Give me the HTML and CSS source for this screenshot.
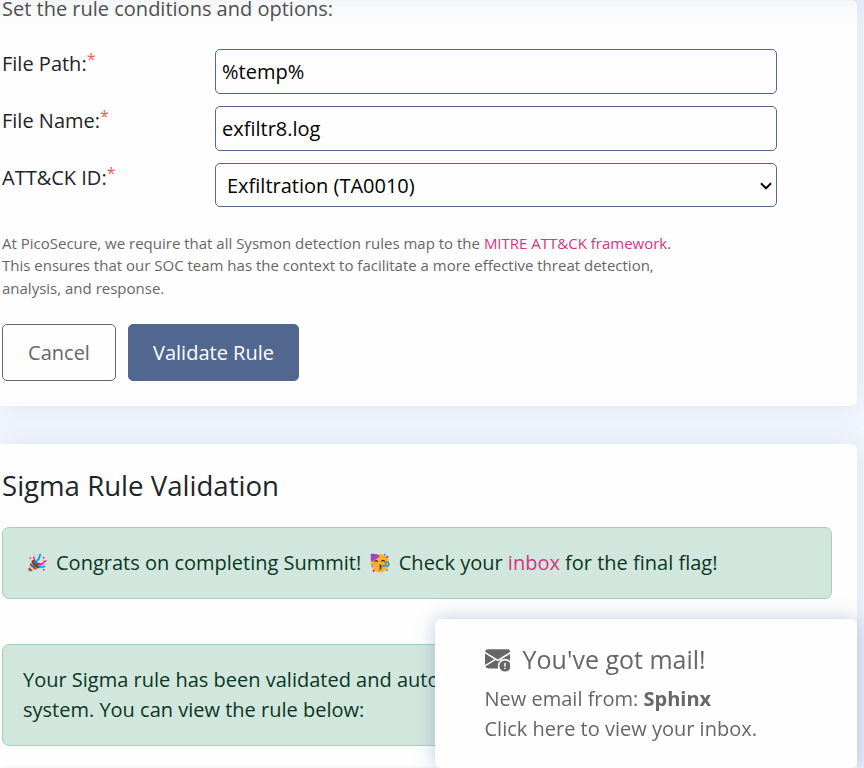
FILE: index.html
```html
<!DOCTYPE html>
<html lang="en">
<head>
<meta charset="utf-8">
<title>Sigma Rule Builder</title>
<link rel="stylesheet" href="styles.css">
</head>
<body>
<main class="page">
  <section class="card card-form">
    <p class="intro">Set the rule conditions and options:</p>
    <form class="rule-form">
      <div class="field">
        <label for="path">File Path:<span class="required">*</span></label>
        <input id="path" class="control" type="text" value="%temp%" spellcheck="false">
      </div>
      <div class="field">
        <label for="name">File Name:<span class="required">*</span></label>
        <input id="name" class="control" type="text" value="exfiltr8.log" spellcheck="false">
      </div>
      <div class="field">
        <label for="attack">ATT&amp;CK ID:<span class="required">*</span></label>
        <div class="select-wrap">
          <select id="attack" class="control control-select"><option>Exfiltration (TA0010)</option></select>
          <svg class="chevron" viewBox="0 0 12 8" aria-hidden="true"><path d="M1 1.300 6 6.300 11 1.300" fill="none" stroke="#000" stroke-width="2"/></svg>
        </div>
      </div>
      <p class="note">At PicoSecure, we require that all Sysmon detection rules map to the <a href="#">MITRE ATT&amp;CK framework</a>. This ensures that our SOC team has the context to facilitate a more effective threat detection, analysis, and response.</p>
      <div class="actions">
        <button type="button" class="btn btn-outline">Cancel</button>
        <button type="button" class="btn btn-primary">Validate Rule</button>
      </div>
    </form>
  </section>

  <section class="card card-result">
    <h2>Sigma Rule Validation</h2>
    <div class="alert alert-congrats">
      <svg class="emoji" viewBox="0 0 20 20" aria-hidden="true">
        <path d="M4.500 7.500 0 19.500 12.500 15z" fill="#ffc83d"/>
        <path d="M3.600 10 10 16l-2 .8L2.800 12zM2 14.300 5.600 17.600l-2 .8L1.200 16.400z" fill="#5b4fc4"/>
        <ellipse cx="8.700" cy="11.200" rx="2.500" ry="5.300" transform="rotate(-45 8.700 11.200)" fill="#6d4534"/>
        <path d="M8.500 10.500C8 7.500 10.500 8 12 5.500 13 3.500 11.500 2 14 1.500" fill="none" stroke="#00a6ed" stroke-width="2"/>
        <path d="M10.500 11.500c2-2.500 2.500 1 4.500-.5s2-3.500 4.500-3" fill="none" stroke="#f70a8d" stroke-width="1.600"/>
        <path d="M10.500 12.500c2-.5 2.500 2 4.500 1.500s2-1 3 0" fill="none" stroke="#00a6ed" stroke-width="1.800"/>
        <path d="M7.500 9C8.500 6 6 6 7 3.500" fill="none" stroke="#f70a8d" stroke-width="1.400"/>
        <path d="M2.500 4.500h1.400v1.400H2.500zM16.500 3.500l1.300 1-1.200 1.200-1-1zM16 16h1.400v1.400H16z" fill="#f70a8d"/>
        <path d="M6.500.5h1.300v1.300H6.500zM15.500 6.800h1.300V8h-1.300zM17.500 10.500h1.300v1.300h-1.300z" fill="#ffb02e"/>
      </svg>
      <span>Congrats on completing Summit!</span>
      <svg class="emoji emoji-face" viewBox="0 0 20 20" aria-hidden="true">
        <circle cx="10" cy="10.300" r="9.200" fill="#ffb02e"/>
        <path d="M.8 8.500.7 1.300 2 .5 9.700 2.200C7 3.500 4.500 5.500.8 8.500z" fill="#8b48cf"/>
        <path d="M1.500 3 5.500.9l2 .5L1.200 5.200zM1 7.300 9 2.400l.7 1.300L2 8.800z" fill="#c23aa8"/>
        <path d="M4.300 8.800q1.600-2.500 3.500 0M11.300 8.600q1.600-2.500 3.500 0" fill="none" stroke="#402a32" stroke-width="1.200"/>
        <path d="M9.200 12c3-.3 2 1.900.4 2 2 .2 2 2.400-.4 2.200" fill="none" stroke="#402a32" stroke-width="1.100"/>
        <path d="M11.500 13h5.300c2.700 0 2.700-4 0-4-2.100 0-2.100 2.300-.4 2.300" fill="none" stroke="#209bc9" stroke-width="1.400"/>
        <path d="M14 .7h1.300v2H14zM1.500 11.500h1.300v2H1.500zM17 16l1.300 1-1 1.200-1.300-1z" fill="#00a6ed"/>
        <path d="m17 2.500 1.500 1L17 5.500l-1-1.200zM3.500 16.500 5 17.700l-1.300 1.600-1.200-1.200z" fill="#f70a8d"/>
      </svg>
      <span>Check your <a href="#">inbox</a> for the final flag!</span>
    </div>
    <div class="alert alert-rule">Your Sigma rule has been validated and automatically<br>system. You can view the rule below:</div>
    <div class="code-panel"></div>
  </section>
</main>

<aside class="toast">
  <h3 class="toast-title">
    <svg class="mail-icon" viewBox="0 0 16 16" fill="currentColor" aria-hidden="true">
      <path d="M.05 3.555A2 2 0 0 1 2 2h12a2 2 0 0 1 1.950 1.555L8 8.414zM0 4.697v7.104l5.803-3.558zm.192 8.159 6.570-4.027L8 9.586l1.239-.757.367.225A4.490 4.490 0 0 0 8 12.500c0 .526.09 1.030.256 1.500H2a2 2 0 0 1-1.808-1.144M16 4.697v4.974A4.500 4.500 0 0 0 12.500 8a4.500 4.500 0 0 0-1.965.45l-.338-.207z"/>
      <path d="M12.500 16a3.500 3.500 0 1 0 0-7 3.500 3.500 0 0 0 0 7m.5-5v1.500a.5.5 0 0 1-1 0V11a.5.5 0 0 1 1 0m0 3a.5.5 0 1 1-1 0 .5.5 0 0 1 1 0"/>
    </svg>
    <span>You've got mail!</span>
  </h3>
  <p>New email from: <strong>Sphinx</strong></p>
  <p>Click here to view your inbox.</p>
</aside>
<div class="top-shade"></div>
</body>
</html>
```
FILE: styles.css
```css
* {
  box-sizing: border-box;
}

body {
  margin: 0;
  height: 768px;
  overflow: hidden;
  background: #f2f6fe;
  color: #212529;
  font: 20px/30px "Open Sans", sans-serif;
}

h2,
h3,
p {
  margin: 0;
  font-weight: 400;
}

a {
  color: #d63384;
  text-decoration: none;
}

.page {
  display: flex;
  flex-direction: column;
  gap: 38px;
  height: 768px;
  overflow: hidden;
}

.card {
  flex: none;
  width: 857px;
  padding-left: 2px;
  border-radius: 0 6px 6px 0;
  background: #fefefe;
  box-shadow: 0 0 30px rgba(82, 110, 150, 0.14);
}

.card-form {
  height: 406px;
}

.intro {
  margin-top: -6px;
  color: #4f4f4f;
}

.rule-form {
  padding-top: 25px;
}

.field {
  display: flex;
  align-items: flex-start;
  width: 775px;
  height: 45px;
  margin-bottom: 12px;
}

.field label {
  flex: 0 0 213px;
}

.required {
  position: relative;
  top: -6px;
  color: #f05a5a;
  font-size: 16px;
  line-height: 0;
}

.control {
  flex: 1;
  min-width: 0;
  height: 45px;
  padding: 0 6px;
  border: 1px solid #51678f;
  border-radius: 5px;
  background: #fefefe;
  color: #000;
  font: inherit;
}

.select-wrap {
  position: relative;
  flex: 1;
  height: 44px;
}

.control-select {
  display: block;
  width: 100%;
  height: 44px;
  padding: 2px 11px 0;
  appearance: none;
}

.chevron {
  position: absolute;
  top: 19px;
  right: 5px;
  width: 12px;
  height: 8px;
  pointer-events: none;
}

.note {
  width: 690px;
  padding-top: 11.500px;
  color: #666;
  font-size: 15px;
  line-height: 22.500px;
}

.actions {
  display: flex;
  gap: 12px;
  margin-top: 24.500px;
}

.btn {
  height: 57px;
  padding: 2px 0 0;
  border: 1px solid #666;
  border-radius: 5px;
  background: #fefefe;
  color: #666;
  font: inherit;
}

.btn-outline {
  width: 114px;
}

.btn-primary {
  width: 171px;
  border-color: #51678f;
  background: #51678f;
  color: #fff;
}

.card-result {
  height: 400px;
  padding-top: 24px;
}

.card-result h2 {
  font-size: 27.600px;
  line-height: 34px;
}

.alert {
  width: 830px;
  border: 1px solid #a3cfbb;
  border-radius: 7px;
  background: #d1e7dd;
  color: #0a3622;
}

.alert-congrats {
  display: flex;
  align-items: center;
  height: 72px;
  margin-top: 25px;
  padding-left: 24px;
}

.emoji {
  width: 20px;
  height: 20px;
  margin-right: 9px;
}

.emoji-face {
  margin: 0 8.500px 0 9px;
}

.alert-rule {
  height: 102px;
  margin-top: 45px;
  padding: 20px;
  white-space: nowrap;
  overflow: hidden;
}

.code-panel {
  width: 830px;
  height: 60px;
  margin-top: 20px;
  background: #f8f8f8;
}

.toast {
  position: fixed;
  top: 619px;
  left: 435px;
  width: 422px;
  height: 149px;
  padding: 24px 0 0 49.500px;
  border-radius: 6px;
  background: #fefefe;
  box-shadow: 0 0 20px rgba(82, 103, 166, 0.35);
  color: #666;
}

.toast-title {
  display: flex;
  align-items: center;
  gap: 12.500px;
  height: 32px;
  margin-bottom: 9px;
  font-size: 25px;
  line-height: 32px;
}

.mail-icon {
  width: 25.600px;
  height: 25.600px;
}

.top-shade {
  position: fixed;
  inset: 0 0 auto;
  height: 24px;
  background: linear-gradient(rgba(80, 100, 130, 0.06), rgba(80, 100, 130, 0));
  pointer-events: none;
}
```
